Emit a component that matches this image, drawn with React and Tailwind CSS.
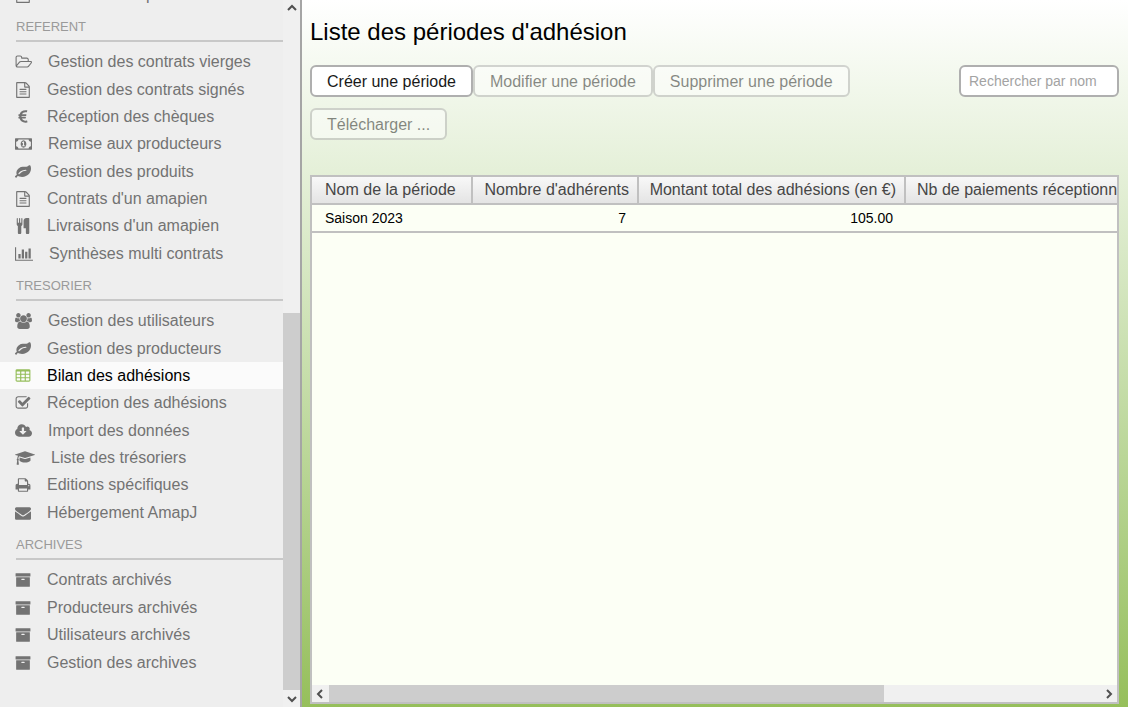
import clsx from 'clsx'

// width is the glyph's advance on a 1792-unit high grid
const icons = {
  folder: { width: 1973, size: 'w-[17px]', d: 'M1845 931q0-35-53-35h-1088q-40 0-85.5 21.5t-71.500 52.500l-294 363q-18 24-18 40 0 35 53 35h1088q40 0 86-22t71-53l294-363q18-22 18-39zm-1141-163h768v-160q0-40-28-68t-68-28h-576q-40 0-68-28t-28-68v-64q0-40-28-68t-68-28h-320q-40 0-68 28t-28 68v853l256-315q44-53 116-87.500t140-34.500zm1269 163q0 62-46 120l-295 363q-43 53-116 87.500t-140 34.500h-1088q-92 0-158-66t-66-158v-960q0-92 66-158t158-66h320q92 0 158 66t66 158v32h544q92 0 158 66t66 158v160h192q54 0 99 24.500t67 70.500q15 32 15 68z' },
  file: { width: 1792, size: 'w-4', d: 'M1596 380q28 28 48 76t20 88v1152q0 40-28 68t-68 28h-1344q-40 0-68-28t-28-68v-1600q0-40 28-68t68-28h896q40 0 88 20t76 48zm-444-244v376h376q-10-29-22-41l-313-313q-12-12-41-22zm384 1528v-1024h-416q-40 0-68-28t-28-68v-416h-768v1536h1280zm-1024-864q0-14 9-23t23-9h704q14 0 23 9t9 23v64q0 14-9 23t-23 9h-704q-14 0-23-9t-9-23v-64zm736 224q14 0 23 9t9 23v64q0 14-9 23t-23 9h-704q-14 0-23-9t-9-23v-64q0-14 9-23t23-9h704zm0 256q14 0 23 9t9 23v64q0 14-9 23t-23 9h-704q-14 0-23-9t-9-23v-64q0-14 9-23t23-9h704z' },
  euro: { width: 1792, size: 'w-4', d: 'M1360 1307l35 159q3 12-3 22.500t-17 14.500l-5 1q-4 2-10.500 3.500t-16 4.500-21.500 5.500-25.500 5-30 5-33.500 4.500-36.500 3-38.500 1q-234 0-409-130.500t-238-351.500h-95q-13 0-22.500-9.500t-9.500-22.500v-113q0-13 9.500-22.500t22.500-9.500h66q-2-57 1-105h-67q-14 0-23-9t-9-23v-114q0-14 9-23t23-9h98q67-210 243.500-338t400.500-128q102 0 194 23 11 3 20 15 6 11 3 24l-43 159q-3 13-14 19.500t-24 2.500l-4-1q-4-1-11.500-2.500l-17.500-3.500-22.500-3.500-26-3-29-2.500-29.500-1q-126 0-226 64t-150 176h468q16 0 25 12 10 12 7 26l-24 114q-5 26-32 26h-488q-3 37 0 105h459q15 0 25 12 9 12 6 27l-24 112q-2 11-11 18.500t-20 7.500h-387q48 117 149.500 185.500t228.500 68.500q18 0 36-1.500t33.500-3.500 29.500-4.500 24.500-5 18.500-4.500l12-3 5-2q13-5 26 2 12 7 15 21z' },
  money: { width: 1920, size: 'w-[17px]', d: 'M768 1152h384v-96h-128v-448h-114l-148 137 77 80q42-37 55-57h2v288h-128v96zm512-256q0 70-21 142t-59.500 134-101.500 101-138 39-138-39-101.500-101-59.500-134-21-142 21-142 59.500-134 101.500-101 138-39 138 39 101.500 101 59.500 134 21 142zm512 256v-512q-106 0-181-75t-75-181h-1152q0 106-75 181t-181 75v512q106 0 181 75t75 181h1152q0-106 75-181t181-75zm128-832v1152q0 26-19 45t-45 19h-1792q-26 0-45-19t-19-45v-1152q0-26 19-45t45-19h1792q26 0 45 19t19 45z' },
  leaf: { width: 1792, size: 'w-4', d: 'M1280 704q0-26-19-45t-45-19q-172 0-318 49.500t-259.500 134-235.500 219.500q-19 21-19 45 0 26 19 45t45 19q24 0 45-19 27-24 74-71t67-66q137-124 268.500-176t313.500-52q26 0 45-19t19-45zm512-198q0 95-20 193-46 224-184.500 383t-357.500 268q-214 108-438 108-148 0-286-47-15-5-88-42t-96-37q-16 0-39.500 32t-45 70-52.500 70-60 32q-43 0-63.500-17.500t-45.500-59.500q-2-4-6-11t-5.500-10-3-9.500-1.500-13.500q0-35 31-73.500t68-65.500 68-56 31-48q0-4-14-38t-16-44q-9-51-9-104 0-115 43.500-220t119-184.500 170.500-139 204-95.500q55-18 145-25.500t179.500-9 178.500-6 163.500-24 113.500-56.500l29.500-29.500 29.500-28 27-20 36.500-16 43.500-4.500q39 0 70.500 46t47.500 112 24 124 8 96z' },
  cutlery: { width: 1792, size: 'w-4', d: 'M832 64v640q0 61-35.500 111t-92.500 70v779q0 52-38 90t-90 38h-128q-52 0-90-38t-38-90v-779q-57-20-92.500-70t-35.500-111v-640q0-26 19-45t45-19 45 19 19 45v416q0 26 19 45t45 19 45-19 19-45v-416q0-26 19-45t45-19 45 19 19 45v416q0 26 19 45t45 19 45-19 19-45v-416q0-26 19-45t45-19 45 19 19 45zm768 0v1600q0 52-38 90t-90 38h-128q-52 0-90-38t-38-90v-512h-224q-13 0-22.500-9.500t-9.500-22.500v-800q0-132 94-226t226-94h256q26 0 45 19t19 45z' },
  chart: { width: 2048, size: 'w-[18px]', d: 'M640 896v512h-256v-512h256zm384-512v1024h-256v-1024h256zm1024 1152v128h-2048v-1536h128v1408h1920zm-640-896v768h-256v-768h256zm384-384v1152h-256v-1152h256z' },
  users: { width: 1920, size: 'w-[17px]', d: 'M593 896q-162 5-265 128h-134q-82 0-138-40.500t-56-118.500q0-353 124-353 6 0 43.500 21t97.500 42.500 119 21.500q67 0 133-23-5 37-5 66 0 139 81 256zm1071 637q0 120-73 189.500t-194 69.500h-874q-121 0-194-69.500t-73-189.500q0-53 3.500-103.500t14-109 26.500-108.500 43-97.500 62-81 85.500-53.500 111.500-20q10 0 43 21.500t73 48 107 48 135 21.500 135-21.500 107-48 73-48 43-21.500q61 0 111.500 20t85.500 53.500 62 81 43 97.500 26.500 108.500 14 109 3.500 103.500zm-1024-1277q0 106-75 181t-181 75-181-75-75-181 75-181 181-75 181 75 75 181zm704 384q0 159-112.500 271.500t-271.500 112.500-271.500-112.500-112.500-271.500 112.500-271.500 271.500-112.500 271.500 112.500 112.500 271.500zm576 225q0 78-56 118.500t-138 40.500h-134q-103-123-265-128 81-117 81-256 0-29-5-66 66 23 133 23 59 0 119-21.500t97.500-42.500 43.500-21q124 0 124 353zm-128-609q0 106-75 181t-181 75-181-75-75-181 75-181 181-75 181 75 75 181z' },
  table: { width: 1792, size: 'w-4', d: 'M224 128h1344q66 0 113 47t47 113v1088q0 66-47 113t-113 47h-1344q-66 0-113-47t-47-113v-1088q0-66 47-113t113-47zM192 416v192q0 32 32 32h320q32 0 32-32v-192q0-32-32-32h-320q-32 0-32 32zM704 416v192q0 32 32 32h320q32 0 32-32v-192q0-32-32-32h-320q-32 0-32 32zM1216 416v192q0 32 32 32h320q32 0 32-32v-192q0-32-32-32h-320q-32 0-32 32zM192 800v192q0 32 32 32h320q32 0 32-32v-192q0-32-32-32h-320q-32 0-32 32zM704 800v192q0 32 32 32h320q32 0 32-32v-192q0-32-32-32h-320q-32 0-32 32zM1216 800v192q0 32 32 32h320q32 0 32-32v-192q0-32-32-32h-320q-32 0-32 32zM192 1184v192q0 32 32 32h320q32 0 32-32v-192q0-32-32-32h-320q-32 0-32 32zM704 1184v192q0 32 32 32h320q32 0 32-32v-192q0-32-32-32h-320q-32 0-32 32zM1216 1184v192q0 32 32 32h320q32 0 32-32v-192q0-32-32-32h-320q-32 0-32 32z' },
  check: { width: 1792, size: 'w-4', d: 'M1472 930v318q0 119-84.500 203.500t-203.500 84.500h-832q-119 0-203.500-84.500t-84.500-203.500v-832q0-119 84.500-203.500t203.500-84.500h832q63 0 117 25 15 7 18 23 3 17-9 29l-49 49q-10 10-23 10-3 0-9-2-23-6-45-6h-832q-66 0-113 47t-47 113v832q0 66 47 113t113 47h832q66 0 113-47t47-113v-254q0-13 9-22l64-64q10-10 23-10 6 0 12 3 20 8 20 29zm231-489l-814 814q-24 24-57 24t-57-24l-430-430q-24-24-24-57t24-57l110-110q24-24 57-24t57 24l263 263 647-647q24-24 57-24t57 24l110 110q24 24 24 57t-24 57z' },
  cloud: { width: 1920, size: 'w-[17px]', d: 'M1280 928q0-14-9-23t-23-9h-224v-352q0-13-9.500-22.500t-22.500-9.500h-192q-13 0-22.500 9.500t-9.500 22.500v352h-224q-13 0-22.500 9.500t-9.500 22.500q0 14 9 23l352 352q9 9 23 9t23-9l351-351q10-12 10-24zm640 224q0 159-112.500 271.500t-271.500 112.500h-1088q-185 0-316.500-131.500t-131.500-316.500q0-130 70-240t188-165q-2-30-2-43 0-212 150-362t362-150q156 0 285.500 87t188.500 231q71-62 166-62 106 0 181 75t75 181q0 76-41 138 130 31 213.500 135.500t83.500 238.500z' },
  graduation: { width: 2304, size: 'w-5', d: 'M1774 836l18 316q4 69-82 128t-235 93.500-323 34.500-323-34.500-235-93.500-82-128l18-316 574 181q22 7 48 7t48-7zm530-324q0 23-22 31l-1120 352q-4 1-10 1t-10-1l-652-206q-43 34-71 111.500t-34 178.500q63 36 63 109 0 69-58 107l58 433q2 14-8 25-9 11-24 11h-192q-15 0-24-11-10-11-8-25l58-433q-58-38-58-107 0-73 65-111 11-207 98-330l-333-104q-22-8-22-31t22-31l1120-352q4-1 10-1t10 1l1120 352q22 8 22 31z' },
  print: { width: 1792, size: 'w-4', d: 'M448 1536h896v-256h-896v256zm0-640h896v-384h-160q-40 0-68-28t-28-68v-160h-640v640zm1152 64q0-26-19-45t-45-19-45 19-19 45 19 45 45 19 45-19 19-45zm128 0v416q0 13-9.500 22.500t-22.500 9.500h-224v160q0 40-28 68t-68 28h-960q-40 0-68-28t-28-68v-160h-224q-13 0-22.500-9.500t-9.500-22.500v-416q0-79 56.500-135.500t135.500-56.500h64v-544q0-40 28-68t68-28h672q40 0 88 20t76 48l152 152q28 28 48 76t20 88v256h64q79 0 135.500 56.500t56.500 135.500z' },
  envelope: { width: 1792, size: 'w-4', d: 'M1792 710v794q0 66-47 113t-113 47h-1472q-66 0-113-47t-47-113v-794q44 49 101 87 362 246 497 345 57 42 92.500 65.500t94.500 48 110 24.500h2q51 0 110-24.500t94.500-48 92.500-65.500q170-123 498-345 57-39 100-87zm0-294q0 79-49 151t-122 123q-376 261-468 325-10 7-42.500 31t-54 38.500-52 32.500-57.500 27-50 9h-2q-23 0-50-9t-57.500-27-52-32.500-54-38.500-42.500-31q-91-64-262-182.500t-205-142.500q-62-42-117-115.500t-55-136.500q0-78 41.500-130t118.500-52h1472q65 0 112.500 47t47.500 113z' },
  archive: { width: 1792, size: 'w-4', d: 'M1088 832q0-26-19-45t-45-19h-256q-26 0-45 19t-19 45 19 45 45 19h256q26 0 45-19t19-45zm576-192v960q0 26-19 45t-45 19h-1408q-26 0-45-19t-19-45v-960q0-26 19-45t45-19h1408q26 0 45 19t19 45zm64-448v256q0 26-19 45t-45 19h-1536q-26 0-45-19t-19-45v-256q0-26 19-45t45-19h1536q26 0 45 19t19 45z' },
}

const sections = [
  {
    title: 'REFERENT',
    height: 'min-h-[219px]',
    items: [
      ['folder', 'Gestion des contrats vierges'],
      ['file', 'Gestion des contrats signés'],
      ['euro', 'Réception des chèques'],
      ['money', 'Remise aux producteurs'],
      ['leaf', 'Gestion des produits'],
      ['file', "Contrats d'un amapien"],
      ['cutlery', "Livraisons d'un amapien"],
      ['chart', 'Synthèses multi contrats'],
    ],
  },
  {
    title: 'TRESORIER',
    height: 'min-h-[219px]',
    items: [
      ['users', 'Gestion des utilisateurs'],
      ['leaf', 'Gestion des producteurs'],
      ['table', 'Bilan des adhésions'],
      ['check', 'Réception des adhésions'],
      ['cloud', 'Import des données'],
      ['graduation', 'Liste des trésoriers'],
      ['print', 'Editions spécifiques'],
      ['envelope', 'Hébergement AmapJ'],
    ],
  },
  {
    title: 'ARCHIVES',
    height: 'min-h-[110px]',
    items: [
      ['archive', 'Contrats archivés'],
      ['archive', 'Producteurs archivés'],
      ['archive', 'Utilisateurs archivés'],
      ['archive', 'Gestion des archives'],
    ],
  },
]

const chevrons = {
  up: 'M1 6l4-4 4 4',
  down: 'M1 3l4 4 4-4',
  left: 'M6 1l-4 4 4 4',
  right: 'M3 1l4 4-4 4',
}

function Icon({ name, className }) {
  const icon = icons[name]
  return <svg viewBox={`0 0 ${icon.width} 1792`} className={clsx('h-4 shrink-0', icon.size, className)} fill="currentColor" fillRule={name === 'table' ? 'evenodd' : 'nonzero'} aria-hidden="true">
    <path d={icon.d} />
  </svg>
}

function ScrollButton({ direction, label }) {
  return <button type="button" aria-label={label} className="flex size-[17px] shrink-0 items-center justify-center bg-[#f0f0f0] text-[#505050]">
    <svg viewBox="0 0 10 10" className="size-[10px]" fill="none" stroke="currentColor" strokeWidth="2" aria-hidden="true">
      <path d={chevrons[direction]} />
    </svg>
  </button>
}

function MenuItem({ icon, label, active }) {
  return <li className={clsx('flex', active && 'bg-[#fbfbfb]')}>
    <a href="#" aria-current={active ? 'page' : undefined} className={clsx('flex flex-1 items-center gap-4 pt-px pl-[15px] text-base leading-[26px] whitespace-nowrap', active ? 'text-black' : 'text-[#737373]')}>
      <Icon name={icon} className={active && 'text-[#97bf5d]'} />
      <span>{label}</span>
    </a>
  </li>
}

function Sidebar() {
  return <aside className="flex w-[302px] shrink-0 border-r-2 border-[#a5a5a5] bg-[#eeeeee]">
    <nav className="min-w-0 flex-1 overflow-hidden">
      {/* scrolled down, only the bottom of the first entry shows */}
      <ul className="-mt-[19px]">
        <MenuItem icon="file" label="Contrats d'un producteur" />
      </ul>
      {sections.map((section) => <section key={section.title}>
        <h2 className="mb-[6px] ml-4 border-b-2 border-[#c8c8c8] pt-[11px] pb-[5px] text-[13px] leading-4 text-[#9a9a9a]">{section.title}</h2>
        <ul className={clsx('grid auto-rows-fr', section.height)}>
          {section.items.map(([icon, label]) => <MenuItem key={label} icon={icon} label={label} active={label === 'Bilan des adhésions'} />)}
        </ul>
      </section>)}
    </nav>
    <div className="flex w-[17px] flex-col bg-[#f0f0f0]">
      <ScrollButton direction="up" label="Défiler vers le haut" />
      <div className="flex flex-1 flex-col justify-end">
        <div className="h-[56%] bg-[#cdcdcd]" />
      </div>
      <ScrollButton direction="down" label="Défiler vers le bas" />
    </div>
  </aside>
}

function ToolButton({ children, disabled }) {
  return <button type="button" disabled={disabled} className="h-8 rounded-md border-2 border-[#afafaf] bg-white px-[15px] pt-px text-base leading-[27px] text-[#191919] disabled:opacity-50">{children}</button>
}

function PeriodTable() {
  const head = 'h-7 border-b-2 border-[#c0c0c0] bg-linear-to-b from-[#f8f8f8] to-[#e4e4e4] p-0 text-base leading-[26px] font-normal text-[#464646]'
  const cell = 'h-7 border-b-2 border-[#c0c0c0] p-0 text-sm leading-[26px] text-black'
  return <div className="flex flex-1 flex-col border-2 border-[#c0c0c0] bg-[#fcfff5]">
    <div className="min-w-0 flex-1 overflow-hidden">
      <table className="w-[1060px] table-fixed border-separate border-spacing-0 whitespace-nowrap">
        <colgroup>
          <col className="w-[161px]" />
          <col className="w-[166px]" />
          <col className="w-[267px]" />
          <col />
        </colgroup>
        <thead>
          <tr>
            <th scope="col" className={clsx(head, 'border-r-2 pl-[13px] text-left')}>Nom de la période</th>
            <th scope="col" className={clsx(head, 'border-r-2 pr-2 text-right')}>Nombre d'adhérents</th>
            <th scope="col" className={clsx(head, 'border-r-2 pr-2 text-right')}>Montant total des adhésions (en €)</th>
            <th scope="col" className={clsx(head, 'pl-[11px] text-left')}>Nb de paiements réceptionnés</th>
          </tr>
        </thead>
        <tbody>
          <tr>
            <td className={clsx(cell, 'pl-[13px]')}>Saison 2023</td>
            <td className={clsx(cell, 'pr-[13px] text-right')}>7</td>
            <td className={clsx(cell, 'pr-[13px] text-right')}>105.00</td>
            <td className={cell} />
          </tr>
        </tbody>
      </table>
    </div>
    <div className="flex bg-[#f0f0f0]">
      <ScrollButton direction="left" label="Défiler vers la gauche" />
      <div className="flex-1">
        <div className="h-full w-[72%] bg-[#cdcdcd]" />
      </div>
      <ScrollButton direction="right" label="Défiler vers la droite" />
    </div>
  </div>
}

export default function App() {
  return <div className="flex h-screen overflow-hidden font-['Liberation_Sans',Arial,sans-serif]">
    <Sidebar />
    <main className="flex min-w-0 flex-1 flex-col bg-linear-to-b from-white to-[#96bf5b] pt-4 pr-[9px] pb-[3px] pl-2">
      <h1 className="text-2xl leading-8 text-black">Liste des périodes d'adhésion</h1>
      <div className="mt-[17px] mb-[35px] flex items-start">
        <div className="flex flex-1 flex-wrap gap-y-[11px]">
          <ToolButton>Créer une période</ToolButton>
          <ToolButton disabled>Modifier une période</ToolButton>
          <ToolButton disabled>Supprimer une période</ToolButton>
          <ToolButton disabled>Télécharger ...</ToolButton>
        </div>
        <input type="text" aria-label="Rechercher par nom" placeholder="Rechercher par nom" className="h-8 w-40 rounded-md border-2 border-[#afafaf] bg-white px-2 text-sm text-black placeholder:text-[#a3a3a3]" />
      </div>
      <PeriodTable />
    </main>
  </div>
}
